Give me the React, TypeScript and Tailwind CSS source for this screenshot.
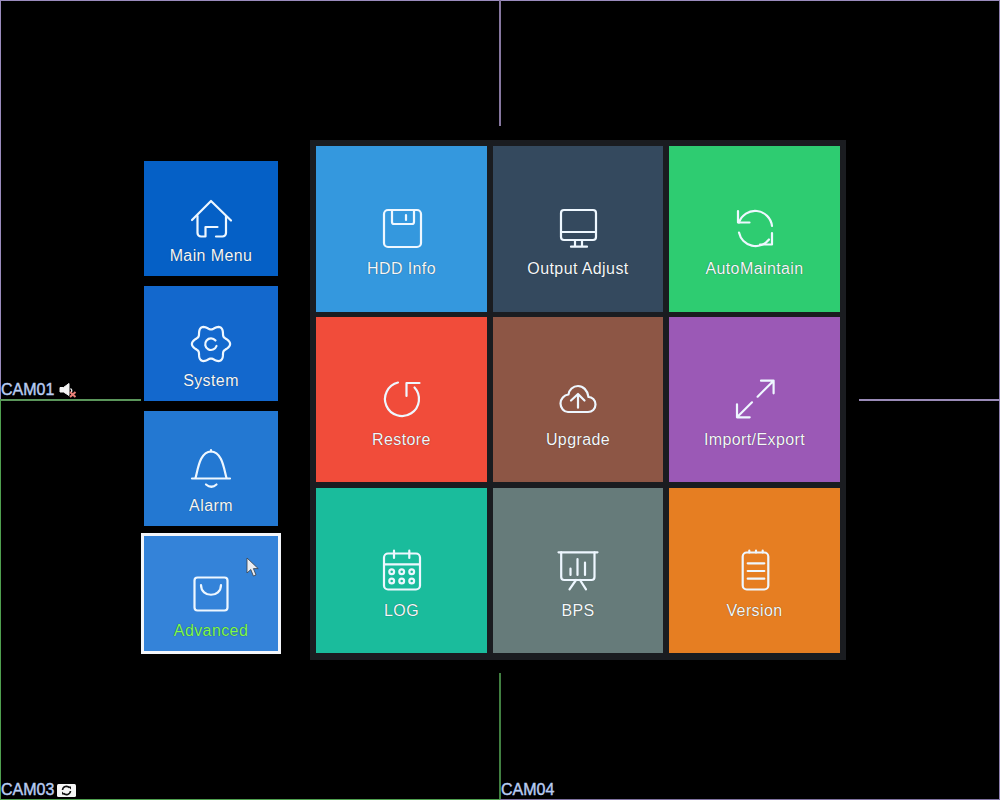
import React from "react";

const gearPath = (() => {
  const pts: string[] = [];
  for (let i = 0; i < 120; i++) {
    const t = (i / 120) * Math.PI * 2;
    const r = 16.8 + 2.3 * Math.cos(6 * t);
    pts.push(`${(24 + r * Math.cos(t)).toFixed(2)} ${(24 + r * Math.sin(t)).toFixed(2)}`);
  }
  return "M" + pts.join("L") + "Z";
})();

function Ico({ children }: { children: React.ReactNode }) {
  return (
    <svg
      viewBox="0 0 48 48"
      fill="none"
      stroke="currentColor"
      strokeWidth="2.2"
      strokeLinecap="round"
      strokeLinejoin="round"
      className="w-12 h-12 shrink-0 text-[#eef7ff]"
    >
      {children}
    </svg>
  );
}

const HomeI = () => (
  <Ico>
    <path d="M5 25L24 6L44 25.5" />
    <path d="M10.5 21V38a3.5 3.5 0 0 0 3.5 3.5H18.5V32H30.5" />
    <path d="M39 21V38a3.5 3.5 0 0 1-3.5 3.5H29" />
  </Ico>
);
const GearI = () => (
  <Ico>
    <path d={gearPath} />
    <path d="M28.5 20.5A5.8 5.8 0 1 0 29.5 26" />
  </Ico>
);
const BellI = () => (
  <Ico>
    <path d="M8.5 33C11 24 13 6.5 24 6.5C35 6.5 37 24 39.5 33" />
    <path d="M24 5V6.5" />
    <path d="M5 33.5H43" />
    <path d="M19 39.5Q24.5 44 29.5 39.5" />
  </Ico>
);
const BagI = () => (
  <Ico>
    <rect x="7.5" y="7.5" width="33" height="33" rx="3" />
    <path d="M14 15C14 28 34 28 34 15" />
  </Ico>
);
const FloppyI = () => (
  <Ico>
    <rect x="6" y="6" width="37" height="37" rx="4" />
    <path d="M14 6V18a2 2 0 0 0 2 2H34a2 2 0 0 0 2-2V6" />
    <path d="M28 11V16" />
  </Ico>
);
const MonitorI = () => (
  <Ico>
    <rect x="7" y="6" width="35" height="30" rx="3" />
    <path d="M7 28H42" />
    <path d="M21 36V42.5M28 36V42.5M17 42.7H33" />
  </Ico>
);
const SyncI = () => (
  <Ico>
    <path d="M7 7V18.5H18.5" />
    <path d="M8 18.5A17 17 0 0 1 41 22" />
    <path d="M41 29V40.5H29" />
    <path d="M8 28.6A17 17 0 0 0 38 35.5" />
  </Ico>
);
const RestoreI = () => (
  <Ico>
    <path d="M20 7.5A17 17 0 1 0 36.5 12.5" />
    <path d="M41.5 8H28.5V21" />
  </Ico>
);
const CloudI = () => (
  <Ico>
    <path d="M14 37H34C38 37 41.5 34 41.5 29.5C41.5 25 38 22 34.5 22C33.5 15 29 11 24 11C19 11 15 15 14.5 19.5C10 20 6.5 24 6.5 28.5C6.5 33 10 37 14 37Z" />
    <path d="M24 32.7V19.3M17 25.5L24 19L30.5 25.5" />
  </Ico>
);
const ExpandI = () => (
  <Ico>
    <path d="M30 5.7H42.6V18.3M42.6 5.7L26.6 21.7" />
    <path d="M18.7 42.3H6V29.3M6 42.3L21 27.3" />
  </Ico>
);
const CalI = () => (
  <Ico>
    <rect x="6" y="7.5" width="36" height="36" rx="4" />
    <path d="M16 4.7V12M31.3 4.7V12M6 18.3H42" />
    {[13.7, 23.7, 33.7].map((x) =>
      [25.7, 35].map((y) => <circle key={`${x}-${y}`} cx={x} cy={y} r="2.4" />)
    )}
  </Ico>
);
const BoardI = () => (
  <Ico>
    <path d="M4.5 6.3H43.5" />
    <path d="M7.2 6.3V31a3 3 0 0 0 3 3H37.5a3 3 0 0 0 3-3V6.3" />
    <path d="M22 34L15.5 43.3M26 34L32 43.3" />
    <path d="M16.5 22.5V29M23.5 13V29M31 16.5V29" />
  </Ico>
);
const NoteI = () => (
  <Ico>
    <rect x="11.7" y="6.5" width="25.6" height="37" rx="4" />
    <path d="M18.3 4.7V6.5M25 4.7V6.5M31.7 4.7V6.5" />
    <path d="M16.7 17.3H33.3M16.7 25H33.3M16.7 32.7H33.3" />
  </Ico>
);

const labelCls =
  "text-[16px] leading-5 tracking-[0.4px] whitespace-nowrap font-['Liberation_Sans',Arial,sans-serif] [text-shadow:0_0_1px_rgba(0,0,0,0.6)]";

function SideTile({ bg, label, icon }: { bg: string; label: string; icon: React.ReactNode }) {
  return (
    <div className={`mx-[3px] w-[134px] h-[115px] flex flex-col items-center pt-[34px] ${bg}`}>
      {icon}
      <div className={`mt-[3px] text-[#f4f7fa] ${labelCls}`}>{label}</div>
    </div>
  );
}

function BigTile({ bg, label, icon, h }: { bg: string; label: string; icon: React.ReactNode; h: string }) {
  return (
    <div className={`flex flex-col items-center pt-[58px] ${bg} ${h}`}>
      {icon}
      <div className={`mt-[7px] text-[#f4f7fa] ${labelCls}`}>{label}</div>
    </div>
  );
}

function CamLabel({ text, className, children }: { text: string; className: string; children?: React.ReactNode }) {
  return (
    <div className={`absolute flex items-center h-5 ${className}`}>
      <span className="text-[16px] leading-5 text-[#b9cdf3] [-webkit-text-stroke:0.4px_#b9cdf3] font-['Liberation_Sans',Arial,sans-serif]">
        {text}
      </span>
      {children}
    </div>
  );
}

export default function App() {
  return (
    <div className="relative w-[1000px] h-[800px] overflow-hidden bg-black">
      {/* camera grid lines */}
      <div className="absolute left-0 top-0 w-[1000px] h-px bg-[#9a8bbd]" />
      <div className="absolute left-0 top-0 w-px h-[400px] bg-[#9a8bbd]" />
      <div className="absolute right-0 top-0 w-px h-[800px] bg-[#8f80b0]" />
      <div className="absolute left-[499px] top-0 w-[2px] h-[126px] bg-[#86779f]" />
      <div className="absolute left-[859px] top-[399px] w-[141px] h-[2px] bg-[#9a8bb8]" />
      <div className="absolute left-0 top-[399px] w-[141px] h-[2px] bg-[#5b965b]" />
      <div className="absolute left-0 top-[400px] w-px h-[400px] bg-[#4f9f4f]" />
      <div className="absolute left-[499px] top-[673px] w-[2px] h-[127px] bg-[#417f41]" />
      <div className="absolute left-0 bottom-0 w-[500px] h-px bg-[#4f9f4f]" />
      <div className="absolute left-[500px] bottom-0 w-[500px] h-px bg-[#7f72a0]" />

      <CamLabel text="CAM01" className="left-[1px] top-[380px]">
        <svg viewBox="0 0 18 15" className="ml-[5px] w-[18px] h-[15px]">
          <path d="M1 4.5H4.5L10 0.5V12.5L4.5 9H1Z" fill="#f4f4f4" stroke="#f4f4f4" strokeWidth="1" />
          <path d="M11.5 5.5Q13.5 7 12.5 9" fill="none" stroke="#f4f4f4" strokeWidth="1.2" />
          <path d="M11 9L16.5 14M16.5 9L11 14" stroke="#ea8078" strokeWidth="2" />
        </svg>
      </CamLabel>
      <CamLabel text="CAM03" className="left-[1px] top-[780px]">
        <svg viewBox="0 0 19 13" className="ml-[3px] w-[19px] h-[13px]">
          <rect width="19" height="13" rx="1.5" fill="#f6f6f6" />
          <path d="M5.5 6A4 4 0 0 1 12.5 3.8M13.5 7A4 4 0 0 1 6.5 9.2" fill="none" stroke="#111" strokeWidth="1.6" />
          <path d="M11 2.5L14 2.5V5.5Z M8 10.5H5V7.5Z" fill="#111" />
        </svg>
      </CamLabel>
      <CamLabel text="CAM04" className="left-[501px] top-[780px]" />

      {/* menu */}
      <div className="relative flex pt-[140px] pl-[141px]">
        <div className="w-[140px] mr-[29px] pt-[21px] flex flex-col gap-[10px]">
          <SideTile bg="bg-[#0560c6]" label="Main Menu" icon={<HomeI />} />
          <SideTile bg="bg-[#1368cd]" label="System" icon={<GearI />} />
          <SideTile bg="bg-[#2378d2]" label="Alarm" icon={<BellI />} />
          <div className="mt-[-3px] w-[140px] h-[121px] border-[3px] border-[#f4f6fa] bg-[#3483d9] flex flex-col items-center pt-[34px]">
            <BagI />
            <div className={`mt-[3px] text-[#80fa50] ${labelCls}`}>Advanced</div>
          </div>
        </div>

        <div className="w-[536px] h-[520px] p-[6px] bg-[#1a1c20] grid grid-cols-[171px_170px_171px] gap-x-[6px] content-start">
          <BigTile h="h-[166px]" bg="bg-[#3498de]" label="HDD Info" icon={<FloppyI />} />
          <BigTile h="h-[166px]" bg="bg-[#34495e]" label="Output Adjust" icon={<MonitorI />} />
          <BigTile h="h-[166px]" bg="bg-[#2ecc71]" label="AutoMaintain" icon={<SyncI />} />
          <BigTile h="h-[165px] mt-[5px]" bg="bg-[#f14c3a]" label="Restore" icon={<RestoreI />} />
          <BigTile h="h-[165px] mt-[5px]" bg="bg-[#8d5645]" label="Upgrade" icon={<CloudI />} />
          <BigTile h="h-[165px] mt-[5px]" bg="bg-[#9b59b6]" label="Import/Export" icon={<ExpandI />} />
          <BigTile h="h-[165px] mt-[6px]" bg="bg-[#1abc9c]" label="LOG" icon={<CalI />} />
          <BigTile h="h-[165px] mt-[6px]" bg="bg-[#667b7a]" label="BPS" icon={<BoardI />} />
          <BigTile h="h-[165px] mt-[6px]" bg="bg-[#e67e22]" label="Version" icon={<NoteI />} />
        </div>
      </div>

      {/* mouse pointer */}
      <svg viewBox="0 0 14 21" className="absolute left-[246px] top-[557px] w-[14px] h-[21px]">
        <path d="M1 1V16L4.8 12.5L7.4 19L10 18L7.4 11.6H12.2Z" fill="#e9edf3" stroke="#3a4048" strokeWidth="0.8" />
      </svg>
    </div>
  );
}
